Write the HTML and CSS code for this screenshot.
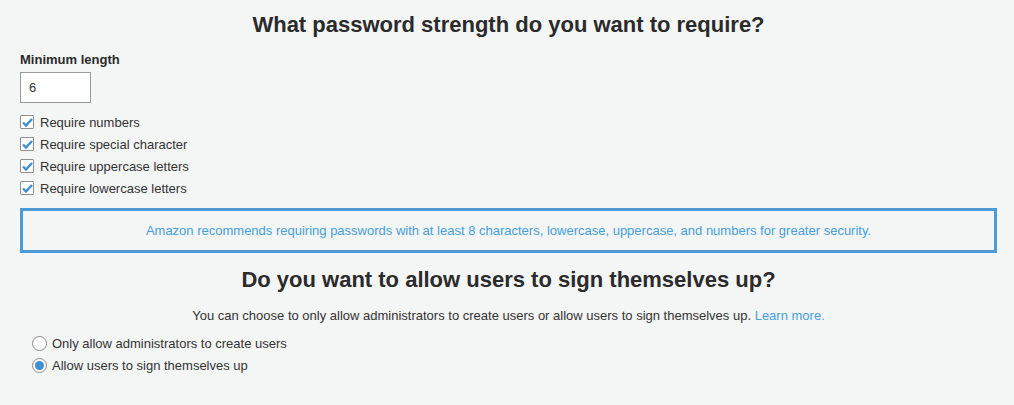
FILE: index.html
```html
<!DOCTYPE html>
<html>
<head>
<meta charset="utf-8">
<link rel="stylesheet" href="styles.css">
</head>
<body>
<div class="page">
  <h2 class="title">What password strength do you want to require?</h2>
  <div class="field">
    <label class="field-label">Minimum length</label>
    <div class="input">6</div>
  </div>
  <ul class="checks">
    <li class="check"><span class="cbox"><svg width="11" height="9" viewBox="0 0 11 9"><path d="M1 4.5 L4 7.5 L10 1" fill="none" stroke="#3f8fd2" stroke-width="2.4"/></svg></span>Require numbers</li>
    <li class="check"><span class="cbox"><svg width="11" height="9" viewBox="0 0 11 9"><path d="M1 4.5 L4 7.5 L10 1" fill="none" stroke="#3f8fd2" stroke-width="2.4"/></svg></span>Require special character</li>
    <li class="check"><span class="cbox"><svg width="11" height="9" viewBox="0 0 11 9"><path d="M1 4.5 L4 7.5 L10 1" fill="none" stroke="#3f8fd2" stroke-width="2.4"/></svg></span>Require uppercase letters</li>
    <li class="check"><span class="cbox"><svg width="11" height="9" viewBox="0 0 11 9"><path d="M1 4.5 L4 7.5 L10 1" fill="none" stroke="#3f8fd2" stroke-width="2.4"/></svg></span>Require lowercase letters</li>
  </ul>
  <div class="notice">Amazon recommends requiring passwords with at least 8 characters, lowercase, uppercase, and numbers for greater security.</div>
  <h2 class="title title-2">Do you want to allow users to sign themselves up?</h2>
  <p class="desc">You can choose to only allow administrators to create users or allow users to sign themselves up. <a class="link">Learn more.</a></p>
  <ul class="radios">
    <li class="radio"><span class="rcircle"></span>Only allow administrators to create users</li>
    <li class="radio"><span class="rcircle on"></span>Allow users to sign themselves up</li>
  </ul>
</div>
</body>
</html>
```
FILE: styles.css
```css
html, body {
  margin: 0;
  padding: 0;
  background: #f4f5f5;
}
body {
  font-family: "Liberation Sans", Arial, sans-serif;
  color: #333;
  font-size: 13px;
}
.page {
  padding: 10px 17px 0 20px;
}
.title {
  margin: 0;
  text-align: center;
  font-size: 22px;
  font-weight: bold;
  color: #2b2b2b;
  line-height: 30px;
}
.field {
  margin-top: 12px;
  display: flex;
  flex-direction: column;
}
.field-label {
  font-weight: bold;
  font-size: 13px;
  line-height: 16px;
  color: #2b2b2b;
}
.input {
  margin-top: 4px;
  width: 69px;
  height: 29px;
  border: 1px solid #9a9a9a;
  background: #fff;
  box-sizing: content-box;
  line-height: 29px;
  padding: 0;
  text-indent: 8px;
  color: #333;
}
.checks {
  list-style: none;
  margin: 8px 0 0;
  padding: 0;
}
.check {
  display: flex;
  align-items: center;
  height: 22px;
}
.cbox {
  width: 12px;
  height: 12px;
  border: 1px solid #8f8f8f;
  background: #fff;
  border-radius: 1px;
  margin-right: 6px;
  display: flex;
  align-items: center;
  justify-content: center;
}
.cbox svg { display: block; }
.notice {
  margin-top: 9px;
  border: 3px solid #4a9bd6;
  height: 39px;
  display: flex;
  align-items: center;
  justify-content: center;
  color: #45a0dc;
  font-size: 13px;
}
.title-2 {
  margin-top: 12px;
}
.desc {
  margin: 13px 0 0;
  text-align: center;
  line-height: 16px;
}
.link {
  color: #45a0dc;
}
.radios {
  list-style: none;
  margin: 8px 0 0;
  padding: 0 0 0 12px;
}
.radio {
  display: flex;
  align-items: center;
  height: 22px;
}
.rcircle {
  width: 15px;
  height: 15px;
  border: 1px solid #8a8a8a;
  border-radius: 50%;
  background: #fff;
  margin-right: 5px;
  box-sizing: border-box;
  position: relative;
  flex: none;
}
.rcircle.on::after {
  content: "";
  position: absolute;
  left: 2px;
  top: 2px;
  width: 9px;
  height: 9px;
  border-radius: 50%;
  background: #3f8fd2;
}
```
